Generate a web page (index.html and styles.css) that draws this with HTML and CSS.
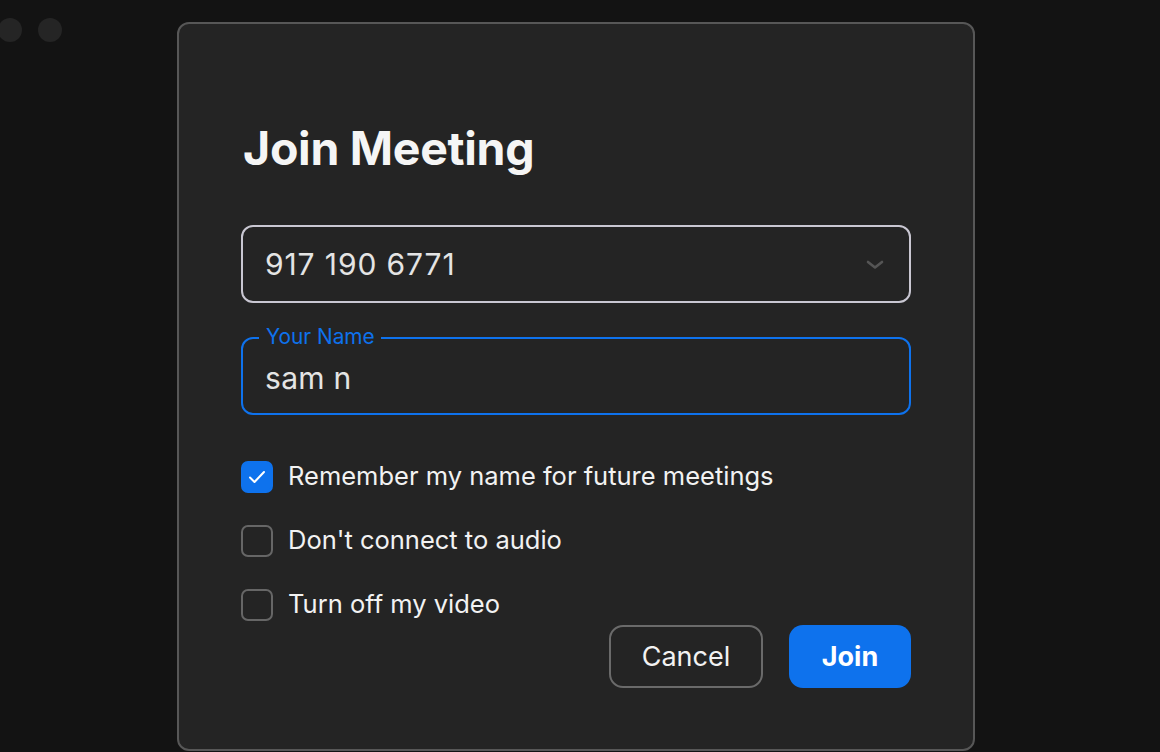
FILE: index.html
```html
<!DOCTYPE html>
<html lang="en">
<head>
    <meta charset="UTF-8">
    <meta name="viewport" content="width=device-width, initial-scale=1.0">
    <title>Join Meeting</title>
    <link rel="stylesheet" href="styles.css">
</head>
<body>
    <div class="window-controls">
        <span class="dot"></span>
        <span class="dot"></span>
    </div>

    <div class="page">
        <div class="dialog">
            <h1 class="title">Join Meeting</h1>

            <div class="field field-select">
                <span class="field-value">917 190 6771</span>
                <svg class="chevron" width="18" height="10" viewBox="0 0 18 10">
                    <path d="M2 2 L9 7.5 L16 2" fill="none" stroke="#555" stroke-width="2.6" stroke-linecap="round" stroke-linejoin="round"/>
                </svg>
            </div>

            <div class="field field-active">
                <span class="field-label">Your Name</span>
                <span class="field-value">sam n</span>
            </div>

            <div class="options">
                <label class="option">
                    <span class="checkbox checked">
                        <svg width="18" height="14" viewBox="0 0 18 14">
                            <path d="M2 7.5 L6.5 12 L16 2" fill="none" stroke="#fff" stroke-width="2" stroke-linecap="round" stroke-linejoin="round"/>
                        </svg>
                    </span>
                    <span class="option-text">Remember my name for future meetings</span>
                </label>
                <label class="option">
                    <span class="checkbox"></span>
                    <span class="option-text">Don't connect to audio</span>
                </label>
                <label class="option">
                    <span class="checkbox"></span>
                    <span class="option-text">Turn off my video</span>
                </label>
            </div>

            <div class="actions">
                <button class="btn btn-cancel">Cancel</button>
                <button class="btn btn-join">Join</button>
            </div>
        </div>
    </div>
</body>
</html>
```

FILE: styles.css
```css
* {
    margin: 0;
    padding: 0;
    box-sizing: border-box;
}

body {
    font-family: Inter, 'Noto Sans', sans-serif;
    background: #131313;
    height: 752px;
    overflow: hidden;
    color: #f2f2f2;
}

.window-controls {
    position: absolute;
    top: 18px;
    left: -2px;
    display: flex;
    gap: 16px;
}

.dot {
    width: 24px;
    height: 24px;
    border-radius: 50%;
    background: #252525;
}

.page {
    padding: 22px 0 0 177px;
}

.dialog {
    width: 798px;
    height: 729px;
    background: #242424;
    border: 2px solid #575757;
    border-radius: 12px;
    padding: 0 62px;
}

.title {
    font-size: 46.5px;
    font-weight: 700;
    line-height: 54px;
    color: #f5f5f5;
    margin: 97px 0 0 2px;
    letter-spacing: -0.3px;
}

.field {
    position: relative;
    height: 78px;
    border-radius: 12px;
    display: flex;
    align-items: center;
    padding: 0 22px;
}

.field-select {
    margin-top: 50px;
    border: 2px solid #c9c7d2;
}

.field-active {
    margin-top: 34px;
    border: 2px solid #0e72ed;
    padding-top: 4px;
}

.field-value {
    flex: 1;
    font-size: 30px;
    color: #e4e4e4;
}

.field-select .field-value {
    letter-spacing: 0.9px;
}

.field-active .field-value {
    letter-spacing: 0.3px;
}

.chevron {
    margin-right: 3px;
    margin-top: 2px;
}

.field-label {
    position: absolute;
    top: -14px;
    left: 16px;
    padding: 0 6px 0 7px;
    background: #242424;
    color: #0e72ed;
    font-size: 20.8px;
    line-height: 24px;
}

.options {
    margin-top: 46px;
    display: flex;
    flex-direction: column;
    gap: 32px;
}

.option {
    display: flex;
    align-items: center;
    gap: 15px;
    height: 32px;
    font-size: 25.5px;
    color: #f2f2f2;
}

.option-text {
    margin-top: -3px;
}

.checkbox {
    width: 32px;
    height: 32px;
    border-radius: 7px;
    border: 2px solid #666;
    display: flex;
    align-items: center;
    justify-content: center;
}

.checkbox.checked {
    background: #0e72ed;
    border-color: #0e72ed;
}

.actions {
    margin-top: 4px;
    display: flex;
    justify-content: flex-end;
    gap: 26px;
}

.btn {
    height: 63px;
    border-radius: 14px;
    font-family: inherit;
    font-size: 27px;
    cursor: pointer;
}

.btn-cancel {
    width: 154px;
    background: transparent;
    border: 2px solid #6a6a6a;
    color: #f2f2f2;
}

.btn-join {
    width: 122px;
    background: #0e72ed;
    border: none;
    color: #fff;
    font-weight: 700;
}
```
